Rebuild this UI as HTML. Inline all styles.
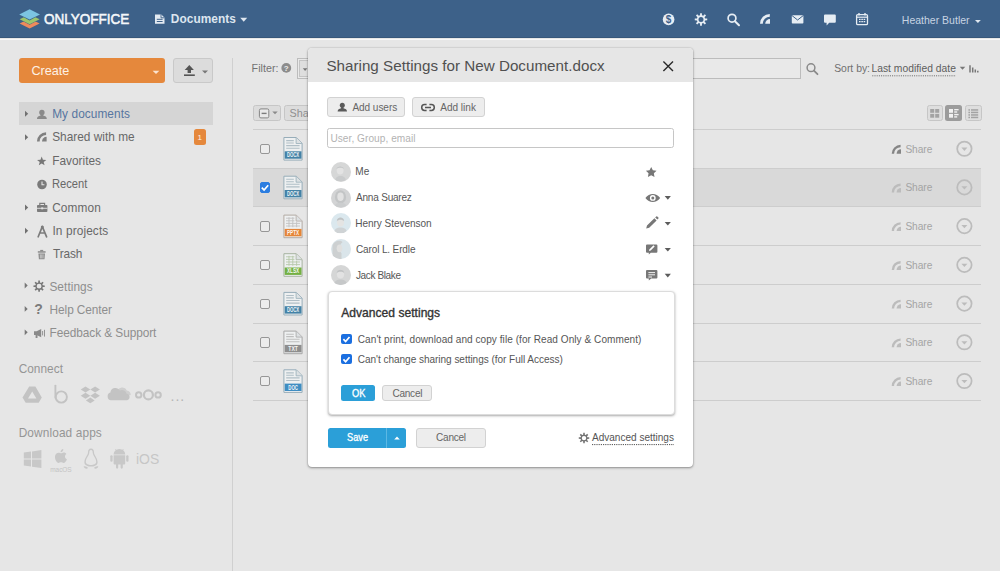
<!DOCTYPE html>
<html lang="en">
<head>
<meta charset="utf-8">
<title>ONLYOFFICE Documents - Sharing Settings</title>
<style>
*{box-sizing:border-box;margin:0;padding:0}
html,body{width:1000px;height:571px;overflow:hidden}
body{font-family:"Liberation Sans",sans-serif;font-size:12px;color:#555;background:#e6e6e6;position:relative}
.a{position:absolute}
.t{position:absolute;white-space:nowrap;line-height:20px}
svg{position:absolute;left:0;top:0;overflow:visible;pointer-events:none}
svg text{font-family:"Liberation Sans",sans-serif}
.btn{position:absolute;background:#ededed;border:1px solid #d2d2d2;border-radius:3px}
.sep{position:absolute;left:253px;width:728px;height:1px;background:#cdcdcd}
.cb{position:absolute;left:259.5px;width:10.5px;height:10.5px;border:1px solid #969696;border-radius:2px;background:#ececec}
.av{position:absolute;left:330.5px;width:20px;height:20px;border-radius:50%;background:#dde3e5;overflow:hidden}
</style>
</head>
<body>
<!-- ============ HEADER ============ -->
<header>
<div class="a" style="left:0;top:0;width:1000px;height:38.3px;background:#3d6189"></div>
<div class="a" style="left:0;top:37px;width:1000px;height:1.3px;background:#36577b"></div>
<div class="a" style="left:0;top:38.8px;width:1000px;height:1px;background:#f6f8fa"></div>
<svg width="1000" height="40" viewBox="0 0 1000 40">
  <!-- logo -->
  <path d="M29.6 18.6 L39.6 23.5 L29.6 28.4 L19.6 23.5Z" fill="#ee8a5c"/>
  <path d="M29.6 13.6 L40 19.2 L29.6 24.8 L19.2 19.2Z" fill="#3d6189"/>
  <path d="M29.6 14.4 L39.6 19.3 L29.6 24.2 L19.6 19.3Z" fill="#9cc56c"/>
  <path d="M29.6 8.4 L40.4 14.4 L29.6 20.4 L18.8 14.4Z" fill="#3d6189"/>
  <path d="M29.6 9.2 L40 14.4 L29.6 19.6 L19.2 14.4Z" fill="#7cc4e2"/>
  <!-- module doc icon -->
  <path d="M155 14.4 h6.3 l3.2 3.2 v6.2 h-9.5Z" fill="#e3eaf2"/>
  <path d="M161 14.4 v3.4 h3.5" fill="none" stroke="#3d6189" stroke-width="0.9"/>
  <path d="M156.8 19.3 h5.8 M156.8 21.5 h5.8" stroke="#3d6189" stroke-width="1"/>
  <path d="M240.2 17.8 h7 l-3.5 4Z" fill="#dfe7f0"/>
  <!-- $ -->
  <circle cx="668.6" cy="19.4" r="5.8" fill="#e6edf4"/>
  <text x="668.6" y="23" font-size="10" font-weight="bold" text-anchor="middle" fill="#3d6189">$</text>
  <!-- gear -->
  <path d="M705.08 18.42 L707.24 18.51 L707.24 20.29 L705.08 20.38 L704.58 21.59 L706.04 23.18 L704.78 24.44 L703.19 22.98 L701.98 23.48 L701.89 25.64 L700.11 25.64 L700.02 23.48 L698.81 22.98 L697.22 24.44 L695.96 23.18 L697.42 21.59 L696.92 20.38 L694.76 20.29 L694.76 18.51 L696.92 18.42 L697.42 17.21 L695.96 15.62 L697.22 14.36 L698.81 15.82 L700.02 15.32 L700.11 13.16 L701.89 13.16 L701.98 15.32 L703.19 15.82 L704.78 14.36 L706.04 15.62 L704.58 17.21Z M703.50 19.40 A2.5 2.5 0 1 0 698.50 19.40 A2.5 2.5 0 1 0 703.50 19.40Z" fill="#e6edf4" fill-rule="evenodd"/>
  <!-- search -->
  <circle cx="732" cy="18.2" r="3.9" fill="none" stroke="#e6edf4" stroke-width="1.7"/>
  <path d="M734.9 21.2 L739 25.3" stroke="#e6edf4" stroke-width="2" stroke-linecap="round"/>
  <!-- feed -->
  <path d="M761.4 23.8 A8.4 8.4 0 0 1 769.8 15.4" fill="none" stroke="#e6edf4" stroke-width="2.8"/>
  <path d="M765.2 23.8 A4.8 4.8 0 0 1 770 19 V23.8Z" fill="#e6edf4"/>
  <!-- mail -->
  <rect x="791.8" y="15.2" width="11.6" height="8.3" rx="0.8" fill="#e6edf4"/>
  <path d="M792 15.6 L797.6 20 L803.2 15.6" fill="none" stroke="#3d6189" stroke-width="1"/>
  <!-- chat -->
  <path d="M825 14.4 h9.8 a1 1 0 0 1 1 1 v6.4 a1 1 0 0 1 -1 1 h-5.6 l-2.6 2.6 v-2.6 h-1.6 a1 1 0 0 1 -1 -1 v-6.4 a1 1 0 0 1 1 -1Z" fill="#e6edf4"/>
  <!-- calendar -->
  <rect x="856.6" y="14.6" width="10.9" height="10" rx="1.2" fill="none" stroke="#e6edf4" stroke-width="1.3"/>
  <path d="M859 13 v2.4 M865 13 v2.4" stroke="#e6edf4" stroke-width="1.4"/>
  <path d="M856.6 17.2 h10.9" stroke="#e6edf4" stroke-width="1.2"/>
  <path d="M859 19.3 h1.6 M861.3 19.3 h1.6 M863.6 19.3 h1.6 M859 21.7 h1.6 M861.3 21.7 h1.6 M863.6 21.7 h1.6" stroke="#e6edf4" stroke-width="1.3"/>
  <!-- user caret -->
  <path d="M975 19.9 h5.8 l-2.9 3Z" fill="#dfe7f0"/>
</svg>
<div class="t" style="left:44.2px;top:9.0px;font-size:15.2px;color:#f4f7fa;transform:scaleX(0.890);transform-origin:0 0;font-weight:normal;-webkit-text-stroke:0.55px currentColor">ONLYOFFICE</div>
<div class="t" style="left:170.8px;top:9.0px;font-size:11.89px;color:#dce5ef;letter-spacing:0.05px;font-weight:bold">Documents</div>
<div class="t" style="left:901.8px;top:11.0px;font-size:10.47px;color:#c7d4e3;letter-spacing:0.02px">Heather Butler</div>
</header>
<!-- ============ SIDEBAR ============ -->
<aside>
<div class="a" style="left:19px;top:58px;width:146.3px;height:25.3px;background:#e5883c;border-radius:3px"></div>
<div class="a" style="left:172.8px;top:58px;width:40.2px;height:25.3px;background:#dcdcdc;border:1px solid #c9c9c9;border-radius:3px"></div>
<div class="a" style="left:232px;top:58px;width:1px;height:513px;background:#d0d0d0"></div>
<div class="a" style="left:19px;top:102.3px;width:194px;height:22.4px;background:#d5d5d5"></div>
<div class="a" style="left:193.7px;top:128.5px;width:12.6px;height:16.7px;background:#e5883c;border-radius:2.5px"></div>
<svg width="240" height="571" viewBox="0 0 240 571">
  <!-- create caret / upload -->
  <path d="M152.6 70.7 h6.8 l-3.4 3.2Z" fill="#fbe3cf"/>
  <path d="M189.3 65 l4.6 5 h-2.9 v3 h-3.4 v-3 h-2.9Z" fill="#555"/>
  <rect x="184" y="74.4" width="10.8" height="1.6" fill="#555"/>
  <path d="M202 70.4 h6 l-3 3.2Z" fill="#777"/>
  <!-- tree triangles -->
  <g fill="#707070">
    <path d="M25 110.8 l3.2 3 l-3.2 3Z"/>
    <path d="M25 134.2 l3.2 3 l-3.2 3Z"/>
    <path d="M25 204.4 l3.2 3 l-3.2 3Z"/>
    <path d="M25 227.8 l3.2 3 l-3.2 3Z"/>
  </g>
  <g fill="#777">
    <path d="M24.7 282.6 l3 2.9 l-3 2.9Z"/>
    <path d="M24.7 306 l3 2.9 l-3 2.9Z"/>
    <path d="M24.7 329.4 l3 2.9 l-3 2.9Z"/>
  </g>
  <!-- my documents: user -->
  <g fill="#8a8a8a">
    <circle cx="41.9" cy="112.4" r="2.7"/>
    <path d="M40.6 114 h2.6 v1.6 c2 .4 3.6 1.4 3.6 3.4 h-9.8 c0 -2 1.6 -3 3.6 -3.4Z"/>
  </g>
  <!-- shared with me -->
  <g>
    <path d="M38.3 141.4 A7.8 7.8 0 0 1 46.1 133.6" fill="none" stroke="#808080" stroke-width="2.7"/>
    <path d="M42 141.4 A4.6 4.6 0 0 1 46.6 136.8 V141.4Z" fill="#808080"/>
  </g>
  <!-- favorites -->
  <path d="M41.70 156.50 L42.93 159.70 L46.36 159.89 L43.70 162.05 L44.58 165.36 L41.70 163.50 L38.82 165.36 L39.70 162.05 L37.04 159.89 L40.47 159.70Z" fill="#777"/>
  <!-- recent -->
  <circle cx="42" cy="184.5" r="4.8" fill="#7a7a7a"/>
  <path d="M42 181.6 v3.2 h2.4" fill="none" stroke="#e6e6e6" stroke-width="1.1"/>
  <!-- common: briefcase -->
  <g fill="#7c7c7c">
    <rect x="37" y="205" width="10.4" height="7" rx="0.8"/>
    <path d="M39.8 205 v-1.6 h4.8 v1.6" fill="none" stroke="#7c7c7c" stroke-width="1.2"/>
  </g>
  <path d="M37 208.3 h10.4" stroke="#e6e6e6" stroke-width="0.9"/>
  <rect x="41.2" y="207.4" width="2" height="1.9" fill="#e6e6e6"/>
  <!-- in projects: compass -->
  <path d="M42.3 226.6 L38.2 236.8 M42.3 226.6 L46.6 236.8 M40 233 h4.8" fill="none" stroke="#7c7c7c" stroke-width="1.7" stroke-linecap="round"/>
  <circle cx="42.3" cy="227" r="1.5" fill="#7c7c7c"/>
  <!-- trash -->
  <g fill="#8c8c8c">
    <rect x="37.8" y="251.2" width="7.8" height="1.5"/>
    <rect x="40.2" y="249.9" width="3" height="1.5"/>
    <path d="M38.4 253.4 h6.6 l-.5 5.9 h-5.6Z"/>
  </g>
  <path d="M40.4 254.4 v4 M41.7 254.4 v4 M43 254.4 v4" stroke="#e6e6e6" stroke-width="0.6"/>
  <!-- settings gear -->
  <path d="M42.80 285.31 L44.74 285.40 L44.74 287.00 L42.80 287.09 L42.34 288.19 L43.66 289.62 L42.52 290.76 L41.09 289.44 L39.99 289.90 L39.90 291.84 L38.30 291.84 L38.21 289.90 L37.11 289.44 L35.68 290.76 L34.54 289.62 L35.86 288.19 L35.40 287.09 L33.46 287.00 L33.46 285.40 L35.40 285.31 L35.86 284.21 L34.54 282.78 L35.68 281.64 L37.11 282.96 L38.21 282.50 L38.30 280.56 L39.90 280.56 L39.99 282.50 L41.09 282.96 L42.52 281.64 L43.66 282.78 L42.34 284.21Z M41.50 286.20 A2.4 2.4 0 1 0 36.70 286.20 A2.4 2.4 0 1 0 41.50 286.20Z" fill="#777" fill-rule="evenodd"/>
  <!-- feedback megaphone -->
  <g fill="#8a8a8a">
    <path d="M34 331.3 h2.6 l4.6 -2.4 v8.4 l-4.6 -2.4 h-2.6Z"/>
    <rect x="35.6" y="334.6" width="1.9" height="3.4"/>
    <path d="M42.6 331 v4.4 M44.5 329.8 v6.8" stroke="#8a8a8a" stroke-width="0.9" fill="none"/>
  </g>
  <!-- connect icons -->
  <g fill="#c3c3c3">
    <!-- gdrive -->
    <path d="M29.2 386.6 h6.2 l6.4 11 l-3.1 5.2 h-13 l-3.2 -5.2Z M32.2 391.4 l-4.2 7 h8.4Z" fill-rule="evenodd"/>
    <!-- box b -->
    <path d="M55.4 385.6 v12.2" stroke="#c3c3c3" stroke-width="1.9" fill="none" stroke-linecap="round"/>
    <circle cx="61.3" cy="397" r="5.6" fill="none" stroke="#c3c3c3" stroke-width="1.9"/>
    <!-- dropbox -->
    <path d="M85.5 386.6 l4.8 3 l-4.8 3 l-4.8 -3Z M95.1 386.6 l4.8 3 l-4.8 3 l-4.8 -3Z M85.5 392.8 l4.8 3 l-4.8 3 l-4.8 -3Z M95.1 392.8 l4.8 3 l-4.8 3 l-4.8 -3Z M90.3 397.6 l4.4 2.8 l-4.4 2.9 l-4.4 -2.9Z"/>
    <!-- onedrive -->
    <path d="M117.500 391.600 a5 5 0 0 1 9.400 -1.200 a4.200 4.200 0 0 1 3.800 4.600 l-4 1Z" fill="#cfcfcf"/>
    <path d="M111 400.2 a3.9 3.9 0 0 1 -.6 -7.6 a5.2 5.2 0 0 1 9.6 -2.2 a4.6 4.6 0 0 1 6.6 3.3 a3.3 3.3 0 0 1 .4 6.5Z"/>
    <!-- nextcloud -->
    <circle cx="148.4" cy="394.9" r="4.5" fill="none" stroke="#c3c3c3" stroke-width="2.2"/>
    <circle cx="138.7" cy="394.9" r="2.7" fill="none" stroke="#c3c3c3" stroke-width="2"/>
    <circle cx="158.1" cy="394.9" r="2.7" fill="none" stroke="#c3c3c3" stroke-width="2"/>
  </g>
  <!-- download apps icons -->
  <g fill="#c8c8c8">
    <!-- windows -->
    <path d="M23.8 452.6 l7.2 -1 v7 h-7.2Z M32 451.4 l9.4 -1.3 v8.5 h-9.4Z M23.8 459.6 h7.2 v7 l-7.2 -1Z M32 459.6 h9.4 v8.5 l-9.4 -1.3Z"/>
    <!-- apple -->
    <path d="M61.6 453.2 c1.6 -1 3.6 -.8 4.8 .7 c-2 1.2 -1.9 4.4 .5 5.3 c-.7 1.9 -1.9 3.7 -3.4 3.7 c-1 0 -1.300 -.6 -2.500 -.6 c-1.200 0 -1.600 .6 -2.500 .6 c-1.800 0 -4.100 -4 -3.400 -7.200 c.600 -2.700 3.300 -3.600 4.900 -2.600 c.500 .3 1.100 .3 1.600 .1Z"/>
    <path d="M60.6 452.2 c-.2 -1.700 1.200 -3.100 2.700 -3.200 c.2 1.600 -1.100 3.200 -2.700 3.200Z"/>
    <!-- linux penguin -->
    <path d="M91 448.600 c2.200 0 3 1.800 3 3.800 c0 2.600 3.600 5.400 3.600 9.800 c0 1.200 -.4 2 -.9 2.600 l-2.100 1.200 c-1.400 .8 -5.800 .8 -7.200 0 l-2.100 -1.200 c-.5 -.6 -.9 -1.400 -.9 -2.600 c0 -4.400 3.600 -7.200 3.600 -9.800 c0 -2 .8 -3.800 3 -3.800Z M91 450 c-1.200 0 -1.700 1.200 -1.700 2.600 c0 2.900 -3.500 5.800 -3.500 9.400 c0 2.100 2.600 3 5.200 3 c2.600 0 5.200 -.9 5.200 -3 c0 -3.600 -3.500 -6.500 -3.500 -9.400 c0 -1.400 -.5 -2.600 -1.700 -2.600Z" fill-rule="evenodd"/>
    <path d="M83.600 466.600 c1.800 -.8 3.400 .4 4.400 1.400 c-1.200 1 -3.400 1 -4.400 -1.400Z M98.400 466.600 c-1.800 -.8 -3.400 .4 -4.400 1.400 c1.200 1 3.400 1 4.400 -1.400Z"/>
    <!-- android -->
    <path d="M113.600 455.200 h11.600 v8.400 a1 1 0 0 1 -1 1 h-1.400 v3 a1.100 1.100 0 0 1 -2.200 0 v-3 h-2.400 v3 a1.100 1.100 0 0 1 -2.200 0 v-3 h-1.400 a1 1 0 0 1 -1 -1Z"/>
    <path d="M113.600 454.400 a5.800 5.400 0 0 1 11.600 0Z"/>
    <path d="M115.400 449 l1.400 2 M123.400 449 l-1.400 2" stroke="#c8c8c8" stroke-width="0.8"/>
    <rect x="110.300" y="455.200" width="2.300" height="6.600" rx="1.100"/>
    <rect x="126.200" y="455.200" width="2.300" height="6.600" rx="1.100"/>
  </g>
</svg>
<div class="t" style="left:31.4px;top:61.0px;font-size:12.66px;color:#fdf1e6;letter-spacing:0.00px">Create</div>
<div class="t" style="left:52.2px;top:104.0px;font-size:11.85px;color:#5776a0;letter-spacing:0.07px">My documents</div>
<div class="t" style="left:52.2px;top:127.0px;font-size:11.85px;color:#686868;letter-spacing:0.01px">Shared with me</div>
<div class="t" style="left:52.2px;top:151.0px;font-size:11.85px;color:#686868;letter-spacing:0.01px">Favorites</div>
<div class="t" style="left:52.3px;top:174.0px;font-size:11.85px;color:#686868;transform:scaleX(0.943);transform-origin:0 0">Recent</div>
<div class="t" style="left:52.2px;top:198.0px;font-size:11.85px;color:#686868;letter-spacing:0.10px">Common</div>
<div class="t" style="left:52.4px;top:221.0px;font-size:11.85px;color:#686868;letter-spacing:0.12px">In projects</div>
<div class="t" style="left:53.0px;top:244.0px;font-size:11.85px;color:#686868;letter-spacing:-0.15px">Trash</div>
<div class="t" style="left:49.4px;top:277.0px;font-size:11.85px;color:#8e8e8e;letter-spacing:0.07px">Settings</div>
<div class="t" style="left:49.6px;top:300.0px;font-size:11.85px;color:#8e8e8e;letter-spacing:-0.08px">Help Center</div>
<div class="t" style="left:49.6px;top:323.0px;font-size:11.85px;color:#8e8e8e;letter-spacing:-0.07px">Feedback &amp; Support</div>
<div class="t" style="left:34.2px;top:299.0px;font-size:14px;color:#7c7c7c;letter-spacing:0.00px;font-weight:bold">?</div>
<div class="t" style="left:197.6px;top:128.0px;font-size:8px;color:#fff3e8;letter-spacing:0.00px">1</div>
<div class="t" style="left:18.7px;top:359.0px;font-size:11.85px;color:#959595;letter-spacing:0.02px">Connect</div>
<div class="t" style="left:170.4px;top:386.0px;font-size:14px;color:#b5b5b5;letter-spacing:1.10px">...</div>
<div class="t" style="left:18.7px;top:423.0px;font-size:11.85px;color:#959595;letter-spacing:0.12px">Download apps</div>
<div class="t" style="left:50.2px;top:460.0px;font-size:6.53px;color:#c4c4c4;letter-spacing:-0.05px">macOS</div>
<div class="t" style="left:136.2px;top:449.0px;font-size:14.6px;color:#c6c6c6;transform:scaleX(0.957);transform-origin:0 0">iOS</div>
</aside>
<!-- ============ MAIN ============ -->
<main>
<!-- filter box -->
<div class="a" style="left:296.7px;top:58px;width:504px;height:20.6px;border:1px solid #bcbcbc;background:#e9e9e9"></div>
<div class="a" style="left:298.7px;top:60px;width:14px;height:16.6px;border:1px solid #c4c4c4;background:#dedede"></div>
<!-- toolbar buttons -->
<div class="a" style="left:252.6px;top:104.9px;width:28.2px;height:16.2px;background:#dcdcdc;border:1px solid #c6c6c6;border-radius:2.5px"></div>
<div class="a" style="left:284.4px;top:104.9px;width:60px;height:16.2px;background:#dcdcdc;border:1px solid #c6c6c6;border-radius:2.5px"></div>
<div class="a" style="left:926.6px;top:104.9px;width:16.3px;height:16.2px;background:#dedede;border:1px solid #c6c6c6;border-radius:2.5px"></div>
<div class="a" style="left:945.2px;top:104.9px;width:16.8px;height:16.2px;background:#9c9c9c;border-radius:2.5px"></div>
<div class="a" style="left:964.8px;top:104.9px;width:16.8px;height:16.2px;background:#dedede;border:1px solid #c6c6c6;border-radius:2.5px"></div>
<!-- selected row -->
<div class="a" style="left:253px;top:168.6px;width:728px;height:38.2px;background:#d9d9d9"></div>
<!-- separators -->
<div class="sep" style="top:129px"></div>
<div class="sep" style="top:167.7px"></div>
<div class="sep" style="top:206.4px"></div>
<div class="sep" style="top:245.1px"></div>
<div class="sep" style="top:283.8px"></div>
<div class="sep" style="top:322.5px"></div>
<div class="sep" style="top:361.3px"></div>
<div class="sep" style="top:400px"></div>
<!-- checkboxes -->
<div class="cb" style="top:143.6px"></div>
<div class="cb" style="top:182.3px;background:#2b7de0;border-color:#2b7de0"></div>
<div class="cb" style="top:221px"></div>
<div class="cb" style="top:259.8px"></div>
<div class="cb" style="top:298.5px"></div>
<div class="cb" style="top:337.2px"></div>
<div class="cb" style="top:375.9px"></div>
<svg width="1000" height="571" viewBox="0 0 1000 571">
  <!-- checked mark -->
  <path d="M261.800 187.600 l2.300 2.400 l4.100 -4.700" fill="none" stroke="#fff" stroke-width="1.700"/>
  <!-- filter help -->
  <circle cx="286.300" cy="67.900" r="4.900" fill="#8c8c8c"/>
  <text x="286.300" y="70.800" font-size="8" font-weight="bold" text-anchor="middle" fill="#eee">?</text>
  <path d="M302.800 68.300 h4.600 l-2.300 2.600Z" fill="#777"/>
  <!-- search -->
  <circle cx="811" cy="67.700" r="3.900" fill="none" stroke="#8a8a8a" stroke-width="1.500"/>
  <path d="M813.900 70.600 L817.500 74.200" stroke="#8a8a8a" stroke-width="1.800" stroke-linecap="round"/>
  <!-- sort caret + icon -->
  <path d="M959.700 66.800 h5.600 l-2.800 3Z" fill="#777"/>
  <path d="M970 65.200 v7.200 M972.700 67.400 v5 M975.300 69.600 v2.800 M977.800 70.800 v1.600" stroke="#777" stroke-width="1.500"/>
  <path d="M872.300 75.800 H956" stroke="#666" stroke-width="1" stroke-dasharray="1 1.200"/>
  <!-- group checkbox -->
  <rect x="259.400" y="108.900" width="9.400" height="9" rx="1.500" fill="#e9e9e9" stroke="#858585" stroke-width="1"/>
  <path d="M261.600 113.400 h5" stroke="#7c7c7c" stroke-width="1.400"/>
  <path d="M272.300 111.400 h5.400 l-2.700 2.900Z" fill="#8a8a8a"/>
  <!-- view icons -->
  <g fill="#a3a3a3">
    <rect x="930.200" y="109" width="4" height="3.800"/><rect x="935.200" y="109" width="4" height="3.800"/>
    <rect x="930.200" y="113.900" width="4" height="3.800"/><rect x="935.200" y="113.900" width="4" height="3.800"/>
  </g>
  <g fill="#f2f2f2">
    <rect x="949" y="109" width="4" height="3.800"/><rect x="949" y="113.900" width="4" height="3.800"/>
    <rect x="954.200" y="109" width="4.400" height="1.400"/><rect x="954.200" y="111.300" width="3" height="1.400"/>
    <rect x="954.200" y="113.900" width="4.400" height="1.400"/><rect x="954.200" y="116.200" width="3" height="1.400"/>
  </g>
  <g fill="#a3a3a3">
    <rect x="968.400" y="109.200" width="1.600" height="1.500"/><rect x="971" y="109.200" width="7.200" height="1.500"/>
    <rect x="968.400" y="111.700" width="1.600" height="1.500"/><rect x="971" y="111.700" width="7.200" height="1.500"/>
    <rect x="968.400" y="114.200" width="1.600" height="1.500"/><rect x="971" y="114.200" width="7.200" height="1.500"/>
    <rect x="968.400" y="116.700" width="1.600" height="1.500"/><rect x="971" y="116.700" width="7.200" height="1.500"/>
  </g>
  <!-- file icons -->
  <g transform="translate(283.4,137.0)"><path d="M0.5 0.5 h12.4 l5.8 5.8 v16.8 h-18.2Z" fill="#eef0f1" stroke="#97adb9" stroke-width="1"/><path d="M12.7 0.7 v5.8 h5.8" fill="#dde1e3" stroke="#97adb9" stroke-width="0.8"/><path d="M2.8 3.6 h7.6 M2.8 6 h7.6 M2.8 8.6 h13.4 M2.8 11.2 h13.4" stroke="#b0bec6" stroke-width="1.1" fill="none"/><rect x="1.3" y="14.3" width="16.8" height="7.4" fill="#4482a6"/><text x="3.60" y="20.3" font-size="6.3" font-weight="bold" textLength="12.2" lengthAdjust="spacingAndGlyphs" fill="#ffffff" opacity=".92">DOCX</text></g>
  <g transform="translate(283.4,175.7)"><path d="M0.5 0.5 h12.4 l5.8 5.8 v16.8 h-18.2Z" fill="#eef0f1" stroke="#97adb9" stroke-width="1"/><path d="M12.7 0.7 v5.8 h5.8" fill="#dde1e3" stroke="#97adb9" stroke-width="0.8"/><path d="M2.8 3.6 h7.6 M2.8 6 h7.6 M2.8 8.6 h13.4 M2.8 11.2 h13.4" stroke="#b0bec6" stroke-width="1.1" fill="none"/><rect x="1.3" y="14.3" width="16.8" height="7.4" fill="#4482a6"/><text x="3.60" y="20.3" font-size="6.3" font-weight="bold" textLength="12.2" lengthAdjust="spacingAndGlyphs" fill="#ffffff" opacity=".92">DOCX</text></g>
  <g transform="translate(283.4,214.6)"><path d="M0.5 0.5 h12.4 l5.8 5.8 v16.8 h-18.2Z" fill="#eef0f1" stroke="#b3aaa3" stroke-width="1"/><path d="M12.7 0.7 v5.8 h5.8" fill="#dde1e3" stroke="#b3aaa3" stroke-width="0.8"/><path d="M2.6 3.6 h8.4 M2.6 6.2 h8.4 M2.6 8.8 h14 M2.6 11.4 h14 M5.6 2.6 v10 M9.4 2.6 v10 M13.2 7.6 v5" stroke="#c2c2c2" stroke-width="0.9" fill="none"/><rect x="1.3" y="14.3" width="16.8" height="7.4" fill="#e58537"/><text x="3.60" y="20.3" font-size="6.3" font-weight="bold" textLength="12.2" lengthAdjust="spacingAndGlyphs" fill="#ffffff" opacity=".92">PPTX</text></g>
  <g transform="translate(283.4,253.2)"><path d="M0.5 0.5 h12.4 l5.8 5.8 v16.8 h-18.2Z" fill="#eef0f1" stroke="#a7b3a0" stroke-width="1"/><path d="M12.7 0.7 v5.8 h5.8" fill="#dde1e3" stroke="#a7b3a0" stroke-width="0.8"/><path d="M2.6 3.6 h8.4 M2.6 6.2 h8.4 M2.6 8.8 h14 M2.6 11.4 h14 M5.6 2.6 v10 M9.4 2.6 v10 M13.2 7.6 v5" stroke="#b7c8aa" stroke-width="0.9" fill="none"/><rect x="1.3" y="14.3" width="16.8" height="7.4" fill="#74b043"/><text x="3.60" y="20.3" font-size="6.3" font-weight="bold" textLength="12.2" lengthAdjust="spacingAndGlyphs" fill="#ffffff" opacity=".92">XLSX</text></g>
  <g transform="translate(283.4,291.9)"><path d="M0.5 0.5 h12.4 l5.8 5.8 v16.8 h-18.2Z" fill="#eef0f1" stroke="#97adb9" stroke-width="1"/><path d="M12.7 0.7 v5.8 h5.8" fill="#dde1e3" stroke="#97adb9" stroke-width="0.8"/><path d="M2.8 3.6 h7.6 M2.8 6 h7.6 M2.8 8.6 h13.4 M2.8 11.2 h13.4" stroke="#b0bec6" stroke-width="1.1" fill="none"/><rect x="1.3" y="14.3" width="16.8" height="7.4" fill="#4482a6"/><text x="3.60" y="20.3" font-size="6.3" font-weight="bold" textLength="12.2" lengthAdjust="spacingAndGlyphs" fill="#ffffff" opacity=".92">DOCX</text></g>
  <g transform="translate(283.4,330.6)"><path d="M0.5 0.5 h12.4 l5.8 5.8 v16.8 h-18.2Z" fill="#eef0f1" stroke="#a6a6a6" stroke-width="1"/><path d="M12.7 0.7 v5.8 h5.8" fill="#dde1e3" stroke="#a6a6a6" stroke-width="0.8"/><path d="M2.8 3.6 h7.6 M2.8 6 h7.6 M2.8 8.6 h13.4 M2.8 11.2 h13.4" stroke="#bebebe" stroke-width="1.1" fill="none"/><rect x="1.3" y="14.3" width="16.8" height="7.4" fill="#8e8e8e"/><text x="4.90" y="20.3" font-size="6.3" font-weight="bold" textLength="9.6" lengthAdjust="spacingAndGlyphs" fill="#ffffff" opacity=".92">TXT</text></g>
  <g transform="translate(283.4,369.3)"><path d="M0.5 0.5 h12.4 l5.8 5.8 v16.8 h-18.2Z" fill="#eef0f1" stroke="#97adb9" stroke-width="1"/><path d="M12.7 0.7 v5.8 h5.8" fill="#dde1e3" stroke="#97adb9" stroke-width="0.8"/><path d="M2.8 3.6 h7.6 M2.8 6 h7.6 M2.8 8.6 h13.4 M2.8 11.2 h13.4" stroke="#b0bec6" stroke-width="1.1" fill="none"/><rect x="1.3" y="14.3" width="16.8" height="7.4" fill="#3f8dc2"/><text x="4.90" y="20.3" font-size="6.3" font-weight="bold" textLength="9.6" lengthAdjust="spacingAndGlyphs" fill="#ffffff" opacity=".92">DOC</text></g>
  <!-- row right side -->
  <g transform="translate(0,148.7)"><circle cx="964.4" cy="0" r="7.2" fill="none" stroke="#bcbcbc" stroke-width="1.75"/><path d="M961.4 -1.1 h6 l-3 3.3Z" fill="#bcbcbc"/><path d="M892.9 5 A7.7 7.7 0 0 1 900.6 -2.7" fill="none" stroke="#858585" stroke-width="2.4"/><path d="M896.6 5 A4.4 4.4 0 0 1 901 .6 V5Z" fill="#858585"/></g>
  <g transform="translate(0,187.4)"><circle cx="964.4" cy="0" r="7.2" fill="none" stroke="#bcbcbc" stroke-width="1.75"/><path d="M961.4 -1.1 h6 l-3 3.3Z" fill="#bcbcbc"/><path d="M892.9 5 A7.7 7.7 0 0 1 900.6 -2.7" fill="none" stroke="#bcbcbc" stroke-width="2.4"/><path d="M896.6 5 A4.4 4.4 0 0 1 901 .6 V5Z" fill="#bcbcbc"/></g>
  <g transform="translate(0,226.1)"><circle cx="964.4" cy="0" r="7.2" fill="none" stroke="#bcbcbc" stroke-width="1.75"/><path d="M961.4 -1.1 h6 l-3 3.3Z" fill="#bcbcbc"/><path d="M892.9 5 A7.7 7.7 0 0 1 900.6 -2.7" fill="none" stroke="#bcbcbc" stroke-width="2.4"/><path d="M896.6 5 A4.4 4.4 0 0 1 901 .6 V5Z" fill="#bcbcbc"/></g>
  <g transform="translate(0,264.9)"><circle cx="964.4" cy="0" r="7.2" fill="none" stroke="#bcbcbc" stroke-width="1.75"/><path d="M961.4 -1.1 h6 l-3 3.3Z" fill="#bcbcbc"/><path d="M892.9 5 A7.7 7.7 0 0 1 900.6 -2.7" fill="none" stroke="#bcbcbc" stroke-width="2.4"/><path d="M896.6 5 A4.4 4.4 0 0 1 901 .6 V5Z" fill="#bcbcbc"/></g>
  <g transform="translate(0,303.6)"><circle cx="964.4" cy="0" r="7.2" fill="none" stroke="#bcbcbc" stroke-width="1.75"/><path d="M961.4 -1.1 h6 l-3 3.3Z" fill="#bcbcbc"/><path d="M892.9 5 A7.7 7.7 0 0 1 900.6 -2.7" fill="none" stroke="#bcbcbc" stroke-width="2.4"/><path d="M896.6 5 A4.4 4.4 0 0 1 901 .6 V5Z" fill="#bcbcbc"/></g>
  <g transform="translate(0,342.3)"><circle cx="964.4" cy="0" r="7.2" fill="none" stroke="#bcbcbc" stroke-width="1.75"/><path d="M961.4 -1.1 h6 l-3 3.3Z" fill="#bcbcbc"/><path d="M892.9 5 A7.7 7.7 0 0 1 900.6 -2.7" fill="none" stroke="#bcbcbc" stroke-width="2.4"/><path d="M896.6 5 A4.4 4.4 0 0 1 901 .6 V5Z" fill="#bcbcbc"/></g>
  <g transform="translate(0,381.0)"><circle cx="964.4" cy="0" r="7.2" fill="none" stroke="#bcbcbc" stroke-width="1.75"/><path d="M961.4 -1.1 h6 l-3 3.3Z" fill="#bcbcbc"/><path d="M892.9 5 A7.7 7.7 0 0 1 900.6 -2.7" fill="none" stroke="#bcbcbc" stroke-width="2.4"/><path d="M896.6 5 A4.4 4.4 0 0 1 901 .6 V5Z" fill="#bcbcbc"/></g>
</svg>
<div class="t" style="left:251.6px;top:58.0px;font-size:10.68px;color:#727272;letter-spacing:0.03px">Filter:</div>
<div class="t" style="left:834.2px;top:59.0px;font-size:10.4px;color:#707070;letter-spacing:0.00px">Sort by:</div>
<div class="t" style="left:871.4px;top:59.0px;font-size:10.31px;color:#5e5e5e;letter-spacing:0.02px">Last modified date</div>
<div class="t" style="left:289.4px;top:103.0px;font-size:10.81px;color:#909090;letter-spacing:0.05px">Share selected</div>
<div class="t" style="left:905.4px;top:140.0px;font-size:10.2px;color:#a4a4a4;letter-spacing:-0.07px">Share</div>
<div class="t" style="left:905.4px;top:178.0px;font-size:10.2px;color:#a4a4a4;letter-spacing:-0.07px">Share</div>
<div class="t" style="left:905.4px;top:217.0px;font-size:10.2px;color:#a4a4a4;letter-spacing:-0.07px">Share</div>
<div class="t" style="left:905.4px;top:256.0px;font-size:10.2px;color:#a4a4a4;letter-spacing:-0.07px">Share</div>
<div class="t" style="left:905.4px;top:295.0px;font-size:10.2px;color:#a4a4a4;letter-spacing:-0.07px">Share</div>
<div class="t" style="left:905.4px;top:333.0px;font-size:10.2px;color:#a4a4a4;letter-spacing:-0.07px">Share</div>
<div class="t" style="left:905.4px;top:372.0px;font-size:10.2px;color:#a4a4a4;letter-spacing:-0.07px">Share</div>
</main>
<!-- ============ DIALOG ============ -->
<section role="dialog" aria-label="Sharing Settings">
<div class="a" style="left:307.8px;top:48.2px;width:385.6px;height:419.2px;background:#fff;border-radius:4px;box-shadow:0 1px 2.5px rgba(0,0,0,.36),0 0 1.5px rgba(0,0,0,.28)"></div>
<div class="a" style="left:307.8px;top:48.2px;width:385.6px;height:33.5px;background:#e6e6e6;border-radius:4px 4px 0 0"></div>
<!-- buttons -->
<div class="btn" style="left:327.3px;top:97.3px;width:78.2px;height:19.3px"></div>
<div class="btn" style="left:412.2px;top:97.3px;width:73.1px;height:19.3px"></div>
<!-- input -->
<div class="a" style="left:327.3px;top:128px;width:347px;height:19.6px;background:#fff;border:1px solid #c6c6c6;border-radius:2.5px"></div>
<!-- avatars -->
<div class="av" style="top:161.600px;background:#d6d7d7"></div>
<div class="av" style="top:187.500px;background:#d3d4d5"></div>
<div class="av" style="top:213.400px;background:#dbe8ee"></div>
<div class="av" style="top:239.300px;background:#dae5ea"></div>
<div class="av" style="top:265.200px;background:#d5d6d6"></div>
<!-- advanced panel -->
<div class="a" style="left:327.5px;top:291.3px;width:347px;height:123.500px;background:#fff;border:1px solid #dcdcdc;border-radius:4px;box-shadow:0 1px 2.5px rgba(0,0,0,.34)"></div>
<div class="a" style="left:341.2px;top:334px;width:10.400px;height:10.200px;background:#1b6fe0;border-radius:2px"></div>
<div class="a" style="left:341.2px;top:354.200px;width:10.400px;height:10.200px;background:#1b6fe0;border-radius:2px"></div>
<div class="a" style="left:341.100px;top:384.900px;width:33.900px;height:16.600px;background:#2b9fd8;border-radius:2.500px"></div>
<div class="btn" style="left:381.600px;top:384.900px;width:50.500px;height:16.600px"></div>
<div class="a" style="left:327.500px;top:428.400px;width:78.600px;height:19.200px;background:#2b9fd8;border-radius:2.500px"></div>
<div class="a" style="left:386px;top:428.400px;width:1px;height:19.200px;background:#5cb8e4"></div>
<div class="btn" style="left:416.200px;top:428.400px;width:69.900px;height:19.200px"></div>
<svg width="1000" height="571" viewBox="0 0 1000 571">
  <defs>
    <clipPath id="avc"><circle cx="10" cy="10" r="9.9"/></clipPath>
  </defs>
  <!-- close -->
  <path d="M663.4 61.5 l9.6 9.4 M673 61.5 l-9.6 9.4" stroke="#2a2a2a" stroke-width="1.4"/>
  <!-- add users icon -->
  <g fill="#5a5a5a">
    <circle cx="342.300" cy="105.200" r="2.500"/>
    <path d="M341.100 106.600 h2.400 v1.600 c2 .4 3.500 1.300 3.500 3.200 h-9.400 c0 -1.900 1.500 -2.800 3.500 -3.200Z"/>
  </g>
  <!-- link icon -->
  <path d="M426.600 104.600 h-2 a2.900 2.900 0 0 0 0 5.800 h2 M429.400 104.600 h2 a2.900 2.900 0 0 1 0 5.800 h-2 M425 107.500 h6" fill="none" stroke="#555" stroke-width="1.500"/>
  <!-- avatars faces -->
  <g transform="translate(330.500,161.600)" clip-path="url(#avc)"><path d="M4.500 20 c0 -4 2.500 -5.600 5.500 -5.600 c3 0 5.500 1.600 5.500 5.600Z" fill="#c9cbcc"/><ellipse cx="9.600" cy="8.600" rx="3.400" ry="4.300" fill="#e3e3e3"/><path d="M6 7.400 c.4 -3.600 6.800 -3.800 7.400 0 c-1.600 -1.600 -5.400 -1.800 -7.400 0Z" fill="#c4c6c7"/></g>
  <g transform="translate(330.500,187.500)" clip-path="url(#avc)"><ellipse cx="10" cy="9.400" rx="5.600" ry="6.600" fill="#c3c5c6"/><ellipse cx="10" cy="9.200" rx="3.200" ry="4.200" fill="#e2e2e2"/><path d="M4 20 c0 -3.400 2.600 -4.800 6 -4.800 c3.400 0 6 1.400 6 4.800Z" fill="#cbcdce"/></g>
  <g transform="translate(330.500,213.400)" clip-path="url(#avc)"><path d="M3.500 20 c0 -4.200 3 -5.800 6.500 -5.800 c3.500 0 6.500 1.600 6.500 5.800Z" fill="#cfd3d5"/><ellipse cx="10" cy="8.800" rx="3.500" ry="4.400" fill="#e4e4e3"/><path d="M6.300 7.800 c0 -4.800 7.400 -4.800 7.400 0 c-1.800 -2 -5.600 -2 -7.400 0Z" fill="#bfc3c5"/></g>
  <g transform="translate(330.500,239.300)" clip-path="url(#avc)"><path d="M2 20 V8 c0 -5 4 -6.500 7 -6.500 c1.500 0 2.500 .5 3 1.500 c-3 2 -3.500 8 -1 11 v6Z" fill="#cdd0d1"/><ellipse cx="9" cy="9" rx="2.800" ry="3.900" fill="#e0e0df"/></g>
  <g transform="translate(330.500,265.200)" clip-path="url(#avc)"><path d="M3.500 20 c0 -4.200 3 -5.600 6.500 -5.600 c3.500 0 6.500 1.400 6.500 5.600Z" fill="#c6c8c9"/><ellipse cx="10" cy="9" rx="3.600" ry="4.400" fill="#e2e2e2"/><path d="M6.200 8 c0 -4.600 7.600 -4.600 7.600 0 c-2 -1.800 -5.600 -1.800 -7.600 0Z" fill="#c1c3c4"/></g>
  <!-- access icons -->
  <path d="M651.20 166.90 L652.85 170.23 L656.53 170.77 L653.86 173.37 L654.49 177.03 L651.20 175.30 L647.91 177.03 L648.54 173.37 L645.87 170.77 L649.55 170.23Z" fill="#777"/>
  <g fill="#777">
    <path d="M645.400 197.900 c2 -2.800 4.600 -4 7.400 -4 c2.800 0 5.400 1.200 7.400 4 c-2 2.800 -4.600 4 -7.400 4 c-2.800 0 -5.400 -1.200 -7.400 -4Z M652.800 195 a2.900 2.900 0 1 0 0 5.800 a2.900 2.900 0 1 0 0 -5.800Z" fill-rule="evenodd"/>
    <circle cx="652.800" cy="197.900" r="1.500"/>
    <path d="M664.7 196.1 h6.2 l-3.1 3.6Z" fill="#5c5c5c"/>
    <!-- pencil -->
    <path d="M646.200 228.600 l.8 -3 l7.400 -7.400 l2.200 2.200 l-7.400 7.400Z M655.200 217.400 l1 -1 a.8 .8 0 0 1 1.100 0 l1.100 1.100 a.8 .8 0 0 1 0 1.100 l-1 1Z"/>
    <path d="M664.7 222.0 h6.2 l-3.1 3.6Z" fill="#5c5c5c"/>
    <!-- review -->
    <path d="M647 244.400 h9.400 a1 1 0 0 1 1 1 v6.400 a1 1 0 0 1 -1 1 h-5.600 l-2 1.800 v-1.800 h-1.800 a1 1 0 0 1 -1 -1 v-6.400 a1 1 0 0 1 1 -1Z"/>
    <path d="M664.7 247.9 h6.2 l-3.1 3.6Z" fill="#5c5c5c"/>
    <!-- comment -->
    <path d="M647 270 h9.400 a1 1 0 0 1 1 1 v6.400 a1 1 0 0 1 -1 1 h-5.200 l-2.400 2.200 v-2.200 h-1.800 a1 1 0 0 1 -1 -1 v-6.400 a1 1 0 0 1 1 -1Z"/>
    <path d="M664.7 273.8 h6.2 l-3.1 3.6Z" fill="#5c5c5c"/>
  </g>
  <path d="M649 251 l.5 -1.700 l4 -4 l1.200 1.200 l-4 4Z" fill="#fff"/>
  <path d="M648.400 272.600 h6.600 M648.400 274.800 h6.600 M648.400 277 h3.600" stroke="#fff" stroke-width="0.900"/>
  <!-- checks -->
  <path d="M343.400 339.200 l2.200 2.300 l3.900 -4.500" fill="none" stroke="#fff" stroke-width="1.700"/>
  <path d="M343.400 359.400 l2.200 2.300 l3.900 -4.500" fill="none" stroke="#fff" stroke-width="1.700"/>
  <!-- save caret up -->
  <path d="M394.200 439.600 h5.600 l-2.800 -3.100Z" fill="#fff"/>
  <!-- adv gear + underline -->
  <path d="M587.40 437.28 L589.25 437.35 L589.25 438.85 L587.40 438.92 L586.98 439.93 L588.24 441.28 L587.18 442.34 L585.83 441.08 L584.82 441.50 L584.75 443.35 L583.25 443.35 L583.18 441.50 L582.17 441.08 L580.82 442.34 L579.76 441.28 L581.02 439.93 L580.60 438.92 L578.75 438.85 L578.75 437.35 L580.60 437.28 L581.02 436.27 L579.76 434.92 L580.82 433.86 L582.17 435.12 L583.18 434.70 L583.25 432.85 L584.75 432.85 L584.82 434.70 L585.83 435.12 L587.18 433.86 L588.24 434.92 L586.98 436.27Z M586.20 438.10 A2.2 2.2 0 1 0 581.80 438.10 A2.2 2.2 0 1 0 586.20 438.10Z" fill="#737373" fill-rule="evenodd"/>
  <path d="M592 444.600 H674" stroke="#505050" stroke-width="1" stroke-dasharray="1.200 1"/>
</svg>
<div class="t" style="left:326.4px;top:56.0px;font-size:15.18px;color:#505050;letter-spacing:0.02px">Sharing Settings for New Document.docx</div>
<div class="t" style="left:352.4px;top:98.0px;font-size:10.05px;color:#666;letter-spacing:-0.05px">Add users</div>
<div class="t" style="left:440.2px;top:98.0px;font-size:10.05px;color:#666;letter-spacing:0.00px">Add link</div>
<div class="t" style="left:330.4px;top:129.0px;font-size:10.1px;color:#b3b3b3;letter-spacing:0.06px">User, Group, email</div>
<div class="t" style="left:355.2px;top:162.0px;font-size:10.05px;color:#565656;letter-spacing:0.30px">Me</div>
<div class="t" style="left:356.0px;top:188.0px;font-size:10.05px;color:#565656;letter-spacing:-0.22px">Anna Suarez</div>
<div class="t" style="left:355.2px;top:214.0px;font-size:10.05px;color:#565656;letter-spacing:-0.04px">Henry Stevenson</div>
<div class="t" style="left:356.0px;top:240.0px;font-size:10.05px;color:#565656;letter-spacing:-0.15px">Carol L. Erdle</div>
<div class="t" style="left:356.0px;top:266.0px;font-size:10.05px;color:#565656;letter-spacing:-0.40px">Jack Blake</div>
<div class="t" style="left:341.2px;top:303.0px;font-size:12.06px;color:#333;letter-spacing:0.03px;font-weight:normal;-webkit-text-stroke:0.35px currentColor">Advanced settings</div>
<div class="t" style="left:357.8px;top:330.0px;font-size:10.05px;color:#565656;letter-spacing:0.05px">Can&#39;t print, download and copy file (for Read Only &amp; Comment)</div>
<div class="t" style="left:357.8px;top:350.0px;font-size:10.05px;color:#565656;letter-spacing:-0.04px">Can&#39;t change sharing settings (for Full Access)</div>
<div class="t" style="left:351.6px;top:384.0px;font-size:10.05px;color:#fff;transform:scaleX(0.929);transform-origin:0 0;font-weight:normal;-webkit-text-stroke:0.3px currentColor">OK</div>
<div class="t" style="left:392.4px;top:384.0px;font-size:10.05px;color:#666;letter-spacing:-0.24px">Cancel</div>
<div class="t" style="left:346.6px;top:428.0px;font-size:10.05px;color:#fff;transform:scaleX(0.917);transform-origin:0 0;font-weight:normal;-webkit-text-stroke:0.3px currentColor">Save</div>
<div class="t" style="left:436.1px;top:428.0px;font-size:10.05px;color:#666;letter-spacing:-0.26px">Cancel</div>
<div class="t" style="left:592.0px;top:428.0px;font-size:10.06px;color:#545454;letter-spacing:-0.01px">Advanced settings</div>
</section>
</body>
</html>
